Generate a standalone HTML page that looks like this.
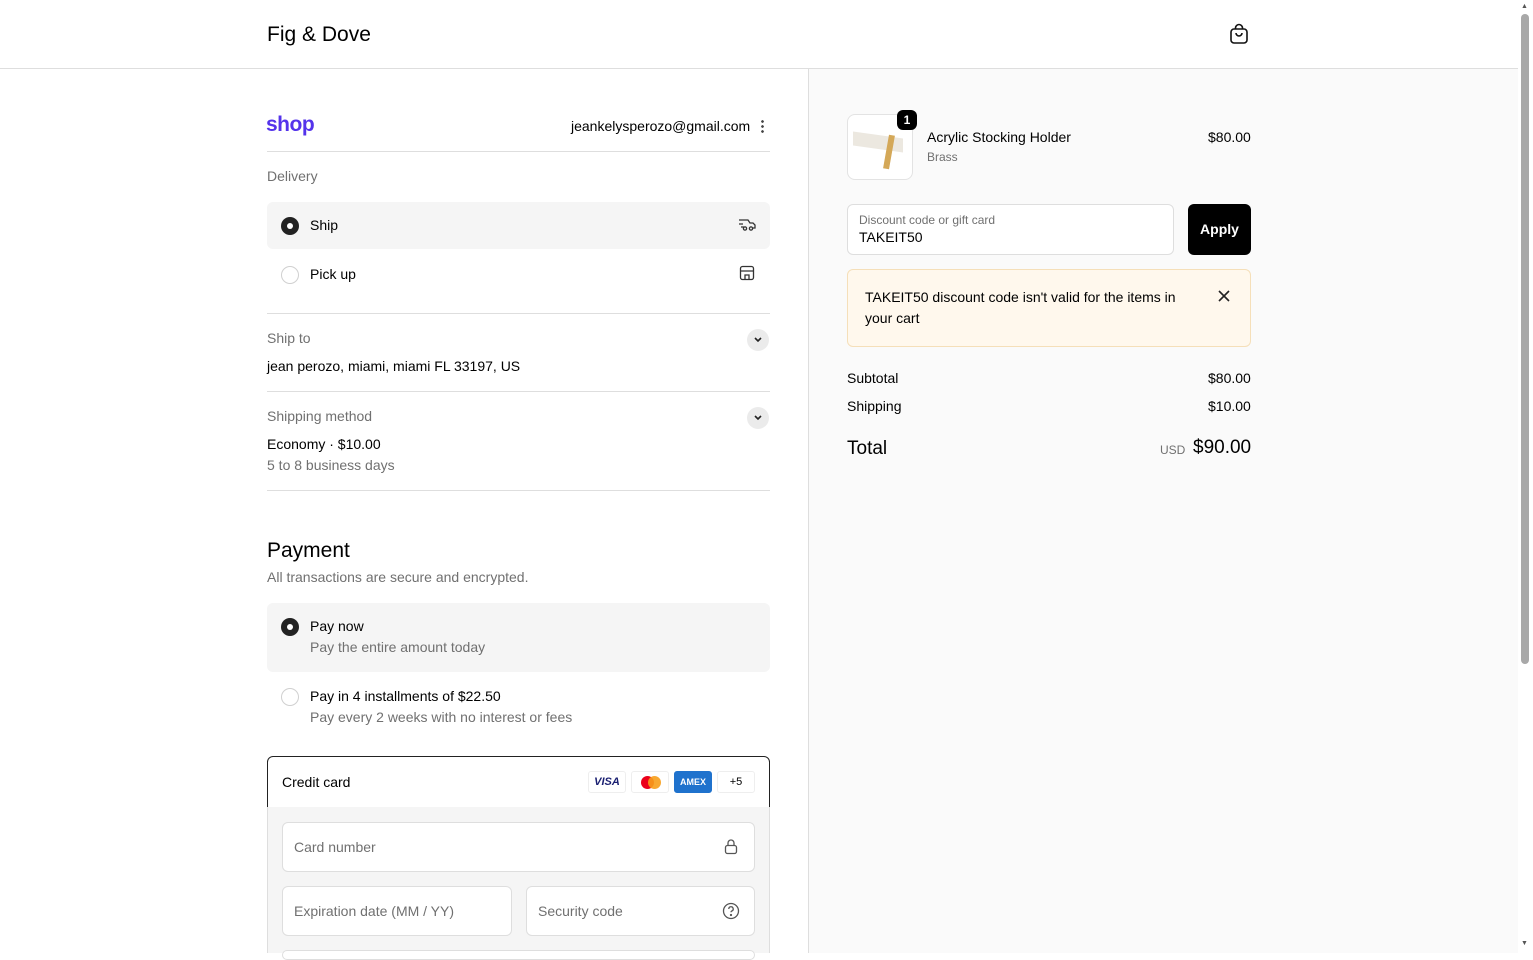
<!DOCTYPE html>
<html><head><meta charset="utf-8"><style>
*{box-sizing:border-box;margin:0;padding:0}
body{width:1533px;height:953px;overflow:hidden;font-family:"Liberation Sans",Arial,sans-serif;color:#000;background:#fff;position:relative;font-size:14px}
.abs{position:absolute}
.hdr{left:0;top:0;width:1518px;height:69px;border-bottom:1px solid #dedede;background:#fff}
.right{left:808px;top:69px;width:710px;height:884px;background:#fafafa;border-left:1px solid #dedede}
.sb{left:1518px;top:0;width:15px;height:953px;background:#fff}
.line{height:1px;background:#dedede;left:267px;width:503px}
.g{color:#707070}
.radio{width:18px;height:18px;border-radius:50%;border:1px solid #d0d0d0;background:#fff}
.radio.on{background:#222;border:none}
.radio.on::after{content:"";position:absolute;left:6px;top:6px;width:6px;height:6px;border-radius:50%;background:#fff}
.chev{width:22px;height:22px;border-radius:50%;background:#ebebeb}
.inp{border:1px solid #dedede;border-radius:6px;background:#fff}
.card{height:22px;border:1px solid #eee;border-radius:3px;background:#fff;font-size:11px;text-align:center;line-height:20px}
</style></head><body>
<div class="abs hdr"></div>
<div class="abs" style="left:267px;top:23px;font-size:21px;">Fig &amp; Dove</div>
<svg class="abs" style="left:1228px;top:23px" width="22" height="22" viewBox="0 0 22 22" fill="none" stroke="#111" stroke-width="1.6"><rect x="3" y="6" width="16" height="14" rx="3"/><path d="M7.5 6V5a3.5 3.5 0 0 1 7 0v1M8 10a3 3 0 0 0 6 0"/></svg>
<div class="abs right"></div>
<div class="abs sb"><div class="abs" style="left:3px;top:14px;width:8px;height:650px;border-radius:4px;background:#a8a8a8"></div><div class="abs" style="left:3px;top:3px;font-size:7px;color:#555">▲</div><div class="abs" style="left:3px;top:940px;font-size:7px;color:#555">▼</div></div>

<div class="abs" style="left:266px;top:113px;font-size:21px;font-weight:bold;color:#5433eb;letter-spacing:-0.5px">shop</div>
<div class="abs" style="left:571px;top:118px;font-size:14px">jeankelysperozo@gmail.com</div>
<div class="abs" style="left:761px;top:119px;width:3px;height:14px;background:radial-gradient(circle,#444 1.2px,transparent 1.5px) 0 0/3px 5px"></div>
<div class="abs line" style="top:151px"></div>
<div class="abs g" style="left:267px;top:168px">Delivery</div>
<div class="abs" style="left:267px;top:202px;width:503px;height:47px;background:#f5f5f5;border-radius:6px"></div>
<div class="abs radio on" style="left:281px;top:217px"></div>
<div class="abs" style="left:310px;top:217px">Ship</div>
<svg class="abs" style="left:738px;top:216px" width="18" height="16" viewBox="0 0 18 16" fill="none" stroke="#333" stroke-width="1.3"><path d="M1 4h9l2 3h3l2 2v3h-2M1 8h4M3 11h3"/><circle cx="7" cy="12.5" r="1.6"/><circle cx="13" cy="12.5" r="1.6"/></svg>
<div class="abs radio" style="left:281px;top:266px"></div>
<div class="abs" style="left:310px;top:266px">Pick up</div>
<svg class="abs" style="left:739px;top:265px" width="16" height="16" viewBox="0 0 16 16" fill="none" stroke="#333" stroke-width="1.3"><rect x="1.5" y="1.5" width="13" height="13" rx="2"/><path d="M1.5 6h13M6 14.5V10h4v4.5"/></svg>
<div class="abs line" style="top:313px"></div>
<div class="abs g" style="left:267px;top:330px">Ship to</div>
<div class="abs chev" style="left:747px;top:329px"></div>
<svg class="abs" style="left:753px;top:336px" width="10" height="8" viewBox="0 0 10 8" fill="none" stroke="#222" stroke-width="1.6"><path d="M2 2l3 3 3-3"/></svg>
<div class="abs" style="left:267px;top:358px">jean perozo, miami, miami FL 33197, US</div>
<div class="abs line" style="top:391px"></div>
<div class="abs g" style="left:267px;top:408px">Shipping method</div>
<div class="abs chev" style="left:747px;top:407px"></div>
<svg class="abs" style="left:753px;top:414px" width="10" height="8" viewBox="0 0 10 8" fill="none" stroke="#222" stroke-width="1.6"><path d="M2 2l3 3 3-3"/></svg>
<div class="abs" style="left:267px;top:436px">Economy · $10.00</div>
<div class="abs g" style="left:267px;top:457px">5 to 8 business days</div>
<div class="abs line" style="top:490px"></div>

<div class="abs" style="left:267px;top:539px;font-size:21px">Payment</div>
<div class="abs g" style="left:267px;top:569px">All transactions are secure and encrypted.</div>
<div class="abs" style="left:267px;top:603px;width:503px;height:69px;background:#f5f5f5;border-radius:6px"></div>
<div class="abs radio on" style="left:281px;top:618px"></div>
<div class="abs" style="left:310px;top:618px">Pay now</div>
<div class="abs g" style="left:310px;top:639px">Pay the entire amount today</div>
<div class="abs radio" style="left:281px;top:688px"></div>
<div class="abs" style="left:310px;top:688px">Pay in 4 installments of $22.50</div>
<div class="abs g" style="left:310px;top:709px">Pay every 2 weeks with no interest or fees</div>
<div class="abs" style="left:267px;top:756px;width:503px;height:52px;border:1px solid #222;border-radius:6px 6px 0 0;background:#fff"></div>
<div class="abs" style="left:282px;top:774px">Credit card</div>
<div class="abs card" style="left:588px;top:771px;width:38px;color:#1a1f71;font-weight:bold;font-style:italic">VISA</div>
<div class="abs card" style="left:631px;top:771px;width:38px"><span class="abs" style="left:9px;top:4px;width:13px;height:13px;border-radius:50%;background:#eb001b"></span><span class="abs" style="left:16px;top:4px;width:13px;height:13px;border-radius:50%;background:#f79e1b;opacity:.9"></span></div>
<div class="abs card" style="left:674px;top:771px;width:38px;background:#1f72cd;color:#fff;font-weight:bold;font-size:9px;border-color:#1f72cd">AMEX</div>
<div class="abs card" style="left:717px;top:771px;width:38px">+5</div>
<div class="abs" style="left:267px;top:807px;width:503px;height:146px;background:#f5f5f5;border-left:1px solid #dedede;border-right:1px solid #dedede"></div>
<div class="abs inp" style="left:282px;top:822px;width:473px;height:50px"></div>
<div class="abs g" style="left:294px;top:839px">Card number</div>
<svg class="abs" style="left:723px;top:838px" width="16" height="18" viewBox="0 0 16 18" fill="none" stroke="#555" stroke-width="1.3"><rect x="2.5" y="7.5" width="11" height="8" rx="2"/><path d="M5 7.5V5a3 3 0 0 1 6 0v2.5"/></svg>
<div class="abs inp" style="left:282px;top:886px;width:230px;height:50px"></div>
<div class="abs g" style="left:294px;top:903px">Expiration date (MM / YY)</div>
<div class="abs inp" style="left:526px;top:886px;width:229px;height:50px"></div>
<div class="abs g" style="left:538px;top:903px">Security code</div>
<svg class="abs" style="left:722px;top:902px" width="18" height="18" viewBox="0 0 18 18" fill="none" stroke="#555" stroke-width="1.3"><circle cx="9" cy="9" r="7.5"/><path d="M6.8 7a2.2 2.2 0 1 1 3 2c-.6.3-.8.7-.8 1.3"/><circle cx="9" cy="13" r=".5" fill="#555"/></svg>
<div class="abs inp" style="left:282px;top:950px;width:473px;height:10px"></div>

<div class="abs" style="left:847px;top:114px;width:66px;height:66px;border:1px solid #e3e3e3;border-radius:8px;background:#fff;overflow:hidden">
<div class="abs" style="left:5px;top:20px;width:50px;height:14px;background:#ece8e0;transform:skewY(8deg)"></div>
<div class="abs" style="left:38px;top:20px;width:6px;height:34px;background:#d4a858;transform:rotate(10deg)"></div>
</div>
<div class="abs" style="left:897px;top:110px;width:20px;height:20px;border-radius:6px;background:#000;color:#fff;font-size:12px;font-weight:bold;text-align:center;line-height:20px">1</div>
<div class="abs" style="left:927px;top:129px">Acrylic Stocking Holder</div>
<div class="abs g" style="left:927px;top:150px;font-size:12px">Brass</div>
<div class="abs" style="left:1208px;top:129px">$80.00</div>
<div class="abs inp" style="left:847px;top:204px;width:327px;height:51px"></div>
<div class="abs g" style="left:859px;top:213px;font-size:12px">Discount code or gift card</div>
<div class="abs" style="left:859px;top:229px">TAKEIT50</div>
<div class="abs" style="left:1188px;top:204px;width:63px;height:51px;background:#000;border-radius:6px;color:#fff;font-weight:bold;text-align:center;line-height:51px">Apply</div>
<div class="abs" style="left:847px;top:269px;width:404px;height:78px;background:#fff8ed;border:1px solid #f5dfb9;border-radius:6px"></div>
<div class="abs" style="left:865px;top:287px;width:330px;line-height:21px">TAKEIT50 discount code isn't valid for the items in your cart</div>
<svg class="abs" style="left:1217px;top:289px" width="14" height="14" viewBox="0 0 14 14" stroke="#222" stroke-width="1.6"><path d="M2 2l10 10M12 2L2 12"/></svg>
<div class="abs" style="left:847px;top:370px">Subtotal</div>
<div class="abs" style="left:1208px;top:370px">$80.00</div>
<div class="abs" style="left:847px;top:398px">Shipping</div>
<div class="abs" style="left:1208px;top:398px">$10.00</div>
<div class="abs" style="left:847px;top:438px;font-size:19px">Total</div>
<div class="abs g" style="left:1160px;top:443px;font-size:12px">USD</div>
<div class="abs" style="left:1193px;top:437px;font-size:19px">$90.00</div>
</body></html>
